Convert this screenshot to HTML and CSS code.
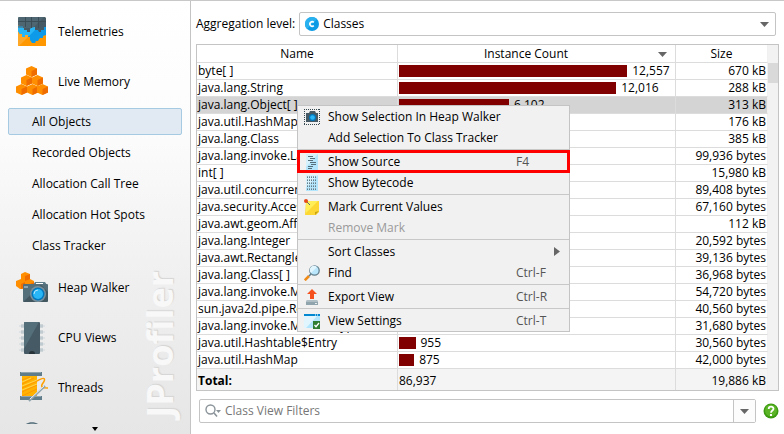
FILE: index.html
```html
<!DOCTYPE html>
<html lang="en">
<head>
<meta charset="utf-8">
<title>JProfiler</title>
<link rel="stylesheet" href="styles.css">
</head>
<body>
<div class="app">
  <aside class="sidebar">
    <div class="watermark" aria-hidden="true">JProfiler</div>
    <nav class="nav">
      <a class="section" href="#telemetries">
        <svg width="32" height="32" viewBox="0 0 32 32"><path fill="#ff9800" d="M2 2h28v28H2z"/><path fill="#ffa726" d="M2 13l18 0L3 30H2z"/><path fill="#0d9be9" d="M2 10h28v9l-3 1v2h-3l-2 3h-2l-1 2h-3l-2-3v-3h-2v-2H9v2H6v-3H4l-2-3z"/><path fill="#29b6f6" d="M2 11l20 0-9 9-1 0v-1H9v2H6v-3H4l-2-3z"/><path fill="#455a64" d="M3 1h26l1 1v9h-2v3h-3v2h-2l-1-2h-3v-3h-3l-2 2v3h-3v-2h-3v-2H7v-2H4l-2-1V2z"/><path fill="#546e7a" opacity=".6" d="M2 1h26L17 12H2z"/><path stroke="#3b4d56" fill="none" d="M2 5.500h28M9.500 1v10M15.500 1v11M22.500 1v11"/></svg>
        <span>Telemetries</span></a>
      <a class="section" href="#memory">
        <svg width="32" height="32" viewBox="0 0 32 32"><defs><g id="cube"><path fill="#ff8f00" d="M0 2.500L5.500 0 11 2.500v6L5.500 11 0 8.500z"/><path fill="#ef6c00" d="M5.500 5L11 2.500v6L5.500 11z"/></g></defs><use href="#cube" x="10" y="0"/><use href="#cube" x="5" y="9"/><use href="#cube" x="16" y="9"/><use href="#cube" x="0" y="18"/><use href="#cube" x="11" y="18"/><use href="#cube" x="21" y="18"/></svg>
        <span>Live Memory</span></a>
      <a class="sub current" href="#all">All Objects</a>
      <a class="sub" href="#recorded">Recorded Objects</a>
      <a class="sub" href="#calltree">Allocation Call Tree</a>
      <a class="sub" href="#hotspots">Allocation Hot Spots</a>
      <a class="sub" href="#tracker">Class Tracker</a>
      <a class="section" href="#heap">
        <svg width="32" height="32" viewBox="0 0 32 32"><path fill="#ff8f00" d="M5 2l4-2 5 2v5l4 2v5l-7 3H4l-4-3V9l5-2z"/><path fill="#ef6c00" d="M9 4l5-2v5l-5 2zM5 12l4-2v5l-4 2zM14 12l4-2v4l-4 2z"/><path fill="#607d8b" d="M17 13l2-3h10l2 3z"/><path fill="#fff" d="M20 11h7v1h-7z"/><rect x="7" y="12" width="25" height="18" rx="1" fill="#546e7a"/><path fill="#37474f" d="M25 13l7 7v9l-1 1H7z" opacity=".6"/><path fill="#90a4ae" d="M8 14h4v2H8z"/><circle cx="22" cy="22" r="8" fill="#78909c"/><circle cx="22" cy="22" r="6.500" fill="#0277bd"/><circle cx="22" cy="22" r="5" fill="#29b6f6"/><path d="M18 22a4 4 0 0 1 4-4" stroke="#b3e5fc" fill="none"/></svg>
        <span>Heap Walker</span></a>
      <a class="section" href="#cpu">
        <svg width="32" height="32" viewBox="0 0 32 32"><path stroke="#b0bec5" stroke-width="3" d="M5 4h22M5 10h22M5 16h22M5 22h22M5 28h22"/><path stroke="#cfd8dc" stroke-width="1" d="M3 4h26M3 10h26M3 16h26M3 22h26M3 28h26"/><rect x="8" y="0" width="16" height="32" rx="1" fill="#455a64"/><path fill="#546e7a" d="M9 0h14L8 27V1z"/><path fill="#263238" d="M13 32a3 3 0 0 1 6 0z"/></svg>
        <span>CPU Views</span></a>
      <a class="section" href="#threads">
        <svg width="32" height="32" viewBox="0 0 32 32"><path fill="#ffb300" d="M6 3h15v22H6z"/><path stroke="#ff9800" fill="none" d="M6 8l8-3M6 12l12-6M6 16l15-7M6 20l15-7M6 24l15-7M14 25l7-3"/><path stroke="#ffd54f" fill="none" d="M6 10l9-4M6 14l15-6M6 18l15-6"/><path fill="#607d8b" d="M4 0h22v4H4zM4 24h22v4H4z"/><path fill="#90a4ae" d="M5 0h20v1H5zM5 24h20v1H5z"/><path stroke="#ffa000" stroke-width="1.500" fill="none" d="M21 9c8-5 9-2 6 2s-1 5 5 5"/><path stroke="#90a4ae" stroke-width="2" fill="none" d="M13 29L29 14"/><path stroke="#eceff1" fill="none" d="M14 27L28 14"/></svg>
        <span>Threads</span></a>
      <a class="section" href="#monitors" aria-label="Monitors">
        <svg width="32" height="32" viewBox="0 0 32 32"><path fill="#546e7a" d="M8 4c3-5 13-5 16 0l2 28H6z"/><path fill="#90a4ae" d="M12 3c2-2 7-2 8 0l-3 2h-3z"/></svg></a>
    </nav>
    <button class="more" aria-label="More views"><svg width="6" height="4" viewBox="0 0 6 4"><path d="M0 0h6L3 4z"/></svg></button>
  </aside>

  <main class="main">
    <div class="level">
      <label for="level">Aggregation level:</label>
      <div class="combo">
        <select id="level"><option>Classes</option></select>
        <svg class="class-icon" width="14" height="14" viewBox="0 0 14 14"><circle cx="7" cy="7" r="7" fill="#0d9be5"/><path fill="#29b1ef" d="M2 12A7 7 0 0 1 12 2z"/><path d="M8.800 5.300a2.300 2.300 0 1 0 0 3.400" fill="none" stroke="#fff" stroke-width="1.600"/></svg>
        <svg class="arrow" width="9" height="5" viewBox="0 0 9 5"><path d="M0 0h9L4.500 5z"/></svg>
      </div>
    </div>

    <div class="grid-frame">
      <table class="objects">
        <colgroup><col class="col-name"><col><col class="col-size"></colgroup>
        <thead><tr><th>Name</th><th class="sorted">Instance Count<svg class="sort" width="9" height="5" viewBox="0 0 9 5"><path d="M0 0h9L4.500 5z"/></svg></th><th>Size</th></tr></thead>
        <tbody>
          <tr><td>byte[ ]</td><td><div class="count"><i style="width:83%"></i>12,557</div></td><td>670 kB</td></tr>
          <tr><td>java.lang.String</td><td><div class="count"><i style="width:79%"></i>12,016</div></td><td>288 kB</td></tr>
          <tr class="selected"><td>java.lang.Object[ ]</td><td><div class="count"><i style="width:40%"></i>6,102</div></td><td>313 kB</td></tr>
          <tr><td>java.util.HashMap$Node</td><td><div class="count"><i style="width:36%"></i>5,504</div></td><td>176 kB</td></tr>
          <tr><td>java.lang.Class</td><td><div class="count"><i style="width:22%"></i>3,312</div></td><td>385 kB</td></tr>
          <tr><td>java.lang.invoke.LambdaForm</td><td><div class="count"><i style="width:20%"></i>3,123</div></td><td>99,936 bytes</td></tr>
          <tr><td>int[ ]</td><td><div class="count"><i style="width:19%"></i>2,910</div></td><td>15,980 kB</td></tr>
          <tr><td>java.util.concurrent.Node</td><td><div class="count"><i style="width:18%"></i>2,794</div></td><td>89,408 bytes</td></tr>
          <tr><td>java.security.AccessControl</td><td><div class="count"><i style="width:11%"></i>1,679</div></td><td>67,160 bytes</td></tr>
          <tr><td>java.awt.geom.AffineTransform</td><td><div class="count"><i style="width:10%"></i>1,560</div></td><td>112 kB</td></tr>
          <tr><td>java.lang.Integer</td><td><div class="count"><i style="width:9%"></i>1,287</div></td><td>20,592 bytes</td></tr>
          <tr><td>java.awt.Rectangle</td><td><div class="count"><i style="width:8%"></i>1,223</div></td><td>39,136 bytes</td></tr>
          <tr><td>java.lang.Class[ ]</td><td><div class="count"><i style="width:8%"></i>1,190</div></td><td>36,968 bytes</td></tr>
          <tr><td>java.lang.invoke.Member</td><td><div class="count"><i style="width:8%"></i>1,140</div></td><td>54,720 bytes</td></tr>
          <tr><td>sun.java2d.pipe.Region</td><td><div class="count"><i style="width:7%"></i>1,014</div></td><td>40,560 bytes</td></tr>
          <tr><td>java.lang.invoke.MethodType</td><td><div class="count"><i style="width:7%"></i>990</div></td><td>31,680 bytes</td></tr>
          <tr><td>java.util.Hashtable$Entry</td><td><div class="count"><i style="width:6%"></i>955</div></td><td>30,560 bytes</td></tr>
          <tr><td>java.util.HashMap</td><td><div class="count"><i style="width:5.500%"></i>875</div></td><td>42,000 bytes</td></tr>
        </tbody>
        <tfoot><tr><td>Total:</td><td>86,937</td><td>19,886 kB</td></tr></tfoot>
      </table>
      <div class="scroll"><div class="thumb"></div></div>
    </div>

    <div class="filter-row">
      <div class="filter">
        <svg width="17" height="14" viewBox="0 0 17 14"><circle cx="5.500" cy="5.500" r="4.500" fill="none" stroke="#8a9399" stroke-width="1.400"/><path d="M9 9l3 3.500" stroke="#8a9399" stroke-width="1.600"/><path fill="#8a9399" d="M11 6h5l-2.500 3z"/></svg>
        <input type="text" aria-label="Class View Filters" placeholder="Class View Filters">
        <button class="drop" aria-label="Filter history"><svg class="arrow-svg" width="9" height="5" viewBox="0 0 9 5"><path d="M0 0h9L4.500 5z"/></svg></button>
      </div>
      <button class="help" aria-label="Help"><svg width="16" height="16" viewBox="0 0 16 16"><circle cx="8" cy="8" r="7.500" fill="#3c9a12"/><circle cx="8" cy="7.500" r="6" fill="#5bb526"/><path d="M5.700 6c0-3 4.800-3 4.800-.2C10.500 7.500 8 7.500 8 9.700" fill="none" stroke="#fff" stroke-width="1.800"/><path fill="#fff" d="M7 11h2v2H7z"/></svg></button>
    </div>
  </main>

  <div class="menu" role="menu">
    <button role="menuitem"><svg width="16" height="16" viewBox="0 0 16 16"><path fill="none" stroke="#37474f" stroke-dasharray="1 1" d="M0 .5h16M0 15.500h16M.5 0v16M15.500 0v16"/><path fill="#455a64" d="M2 4h3l1-2h5l1 2h2v9H2z"/><circle cx="8.500" cy="8.500" r="3.500" fill="#0277bd"/><circle cx="8.500" cy="8.500" r="2.300" fill="#29b6f6"/></svg><span>Show Selection In Heap Walker</span></button>
    <button role="menuitem"><i class="blank"></i><span>Add Selection To Class Tracker</span></button>
    <hr>
    <button role="menuitem" class="marked"><svg width="16" height="16" viewBox="0 0 16 16"><path fill="#b3e5fc" d="M2 0h12v16H2z"/><path fill="#d7f1fc" d="M2 0h12L2 13z"/><path stroke="#546e7a" d="M4 2.500h5M6 4.500h5M4 6.500h5M6 8.500h6M7 10.500h5M4 12.500h5M4 14.500h4"/></svg><span>Show Source</span><kbd>F4</kbd></button>
    <button role="menuitem"><svg width="16" height="16" viewBox="0 0 16 16"><path fill="#b3e5fc" d="M2 0h12v16H2z"/><path fill="#d7f1fc" d="M2 0h12L2 13z"/><path stroke="#607d8b" stroke-dasharray="1 1" d="M3 2.500h10M3 5.500h10M3 8.500h10M3 11.500h10M3 14.500h10"/><path stroke="#90a4ae" stroke-dasharray="1 1" d="M3 1.500h10M3 4.500h10M3 7.500h10M3 10.500h10M3 13.500h10"/></svg><span>Show Bytecode</span></button>
    <hr>
    <button role="menuitem"><svg width="16" height="16" viewBox="0 0 16 16"><path fill="#fdd835" d="M2 2h13v11l-3 3H1z"/><path fill="#ffee58" d="M2 2h12L2 14z"/><path fill="#c8a415" d="M15 12l-4 4v-3z"/><path stroke="#546e7a" d="M3 3l3 3"/><circle cx="2" cy="2" r="2" fill="#e64a19"/></svg><span>Mark Current Values</span></button>
    <button role="menuitem" disabled><i class="blank"></i><span>Remove Mark</span></button>
    <hr>
    <button role="menuitem"><i class="blank"></i><span>Sort Classes</span><svg class="expand" width="6" height="9" viewBox="0 0 6 9"><path fill="#666" d="M0 0l6 4.500L0 9z"/></svg></button>
    <button role="menuitem"><svg width="16" height="16" viewBox="0 0 16 16"><path stroke="#ef8a17" stroke-width="2.600" d="M.8 15.200L5 11"/><path stroke="#607d8b" stroke-width="1.600" d="M5 11l2-2"/><circle cx="10.500" cy="5.500" r="4.700" fill="#b9e6fb" stroke="#607d8b" stroke-width="1.300"/><path fill="#e1f5fe" d="M7 8a4 4 0 0 1 6-6z"/></svg><span>Find</span><kbd>Ctrl-F</kbd></button>
    <hr>
    <button role="menuitem"><svg width="16" height="16" viewBox="0 0 16 16"><path fill="#f4511e" d="M8 0l5 5h-3v5H6V5H3z"/><path fill="#b0bec5" d="M3 11h10l1 1v4H2v-4z"/><path fill="#90a4ae" d="M2 13h12v3H2z"/><path fill="#eceff1" d="M11 14h2v1h-2z"/></svg><span>Export View</span><kbd>Ctrl-R</kbd></button>
    <hr>
    <button role="menuitem"><svg width="16" height="16" viewBox="0 0 16 16"><path fill="#b3e5fc" d="M0 1h16v14H0z"/><path fill="#e1f5fe" d="M0 3h13L2 15H0z"/><path fill="#0288d1" d="M0 1h16v2H0z"/><path fill="#fff" d="M11 1.500h1v1h-1zM13 1.500h1v1h-1z"/><path fill="#2e7d32" d="M9 8h7v8H9z"/><path d="M10.500 12l1.500 1.700 3-3.700" fill="none" stroke="#fff" stroke-width="1.300"/></svg><span>View Settings</span><kbd>Ctrl-T</kbd></button>
  </div>
</div>
</body>
</html>
```
FILE: styles.css
```css
* { box-sizing: border-box; }
body {
  margin: 0;
  font: 12px/16px "Open Sans", "Noto Sans", sans-serif;
  color: #000;
  background: #fff;
}
button, input, select { font: inherit; color: inherit; }
svg { flex: none; display: block; }
a { color: inherit; text-decoration: none; }

.app {
  position: relative;
  display: flex;
  height: 100vh;
  border-top: 1px solid #c8c8c8;
}

/* Sidebar */
.sidebar {
  position: relative;
  display: flex;
  flex-direction: column;
  flex: 0 0 191px;
  border-right: 1px solid #c4c4c4;
  background: linear-gradient(#fff, #fcfcfc 30%, #efefef 66%, #e6e6e6);
}
.nav {
  position: relative;
  flex: 1;
  min-height: 0;
  overflow: hidden;
  padding: 6px 8px 0;
}
.section {
  display: flex;
  align-items: center;
  gap: 10px;
  height: 50px;
  padding-left: 8px;
}
.sub {
  display: flex;
  align-items: center;
  height: 27px;
  margin: 4px 0;
  padding-left: 23px;
  border: 1px solid transparent;
  border-radius: 2px;
}
.section + .sub { margin-top: 1px; }
.current { background: #e1eaf3; border-color: #a5cae2; }
.more {
  display: flex;
  justify-content: center;
  align-items: center;
  height: 10px;
  padding: 0;
  border: 0;
  background: none;
}
.watermark {
  position: absolute;
  right: 7px;
  bottom: 16px;
  writing-mode: vertical-rl;
  transform: rotate(180deg);
  font: bold 36px/46px "Open Sans", sans-serif;
  color: #f8f8f8;
  text-shadow: 1px 1px 1px #d4d4d4;
}

/* Main view */
.main {
  display: flex;
  flex-direction: column;
  flex: 1;
  min-width: 0;
  padding: 11px 5px 11px;
}
.level {
  display: flex;
  align-items: center;
  gap: 4px;
  padding-right: 3px;
}
.level label { flex: none; white-space: nowrap; }
.combo { position: relative; flex: 1; }
.combo select {
  display: block;
  width: 100%;
  height: 24px;
  padding: 0 23px;
  border: 1px solid #c4c4c4;
  border-radius: 2px;
  background: #fff;
  appearance: none;
}
.class-icon { position: absolute; left: 6px; top: 5px; }
.arrow { position: absolute; right: 7px; top: 10px; }
.arrow, .sort, .arrow-svg { fill: #666; }

.grid-frame {
  display: flex;
  margin-top: 8px;
  border: 1px solid #c4c4c4;
}
.objects {
  flex: 1;
  min-width: 0;
  table-layout: fixed;
  border-spacing: 0;
}
.col-name { width: 201px; }
.col-size { width: 92px; }
.objects th, .objects td {
  height: 17px;
  padding: 0 1px;
  line-height: 16px;
  border-bottom: 1px solid #dcdcdc;
  border-right: 1px solid #dcdcdc;
  text-align: left;
  white-space: nowrap;
  overflow: hidden;
}
.objects th {
  position: relative;
  height: 18px;
  line-height: 17px;
  font-weight: normal;
  text-align: center;
}
.objects th.sorted { padding-right: 22px; }
.sort { position: absolute; right: 8px; top: 7px; }
.objects td:last-child { text-align: right; }
.objects th:last-child, .objects td:last-child { border-right-color: #f0f0f0; }
.selected { background: #d4d4d4; }
.count { display: flex; align-items: center; gap: 5px; height: 16px; }
.count i { flex: none; height: 12px; background: #800000; }
.objects tfoot td {
  height: 21px;
  padding-top: 2px;
  line-height: 19px;
  border-bottom: 0;
  background: #f4f4f4;
}
.objects tfoot td:first-child { font-weight: bold; }
.scroll { flex: 0 0 10px; padding-top: 18px; background: #f2f2f2; }
.thumb { height: 20px; background: #d9d9d9; }

/* Filter bar */
.filter-row {
  display: flex;
  align-items: center;
  gap: 7px;
  margin-top: 8px;
  padding-left: 3px;
}
.filter {
  display: flex;
  align-items: center;
  gap: 3px;
  flex: 1;
  height: 24px;
  padding-left: 5px;
  border: 1px solid #c4c4c4;
  border-radius: 2px;
}
.filter input {
  flex: 1;
  min-width: 0;
  padding: 0;
  border: 0;
  outline: 0;
  background: none;
}
.filter input::placeholder { color: #777; opacity: 1; }
.drop {
  display: flex;
  align-items: center;
  justify-content: center;
  width: 22px;
  height: 22px;
  padding: 0;
  border: 0;
  border-left: 1px solid #c4c4c4;
  background: #fcfcfc;
}
.help { padding: 0; border: 0; background: none; }

/* Context menu */
.menu {
  position: absolute;
  left: 297px;
  top: 104px;
  width: 273px;
  border: 1px solid #c4c4c4;
  background: #f1f1f1;
}
.menu button {
  display: flex;
  align-items: center;
  gap: 8px;
  width: 100%;
  height: 21px;
  padding: 0 6px;
  border: 0;
  background: none;
  text-align: left;
  white-space: nowrap;
}
.menu button span { flex: 1; }
.menu button:disabled { color: #9a9a9a; }
.menu hr {
  height: 3px;
  margin: 0;
  border: 1px solid #f1f1f1;
  border-width: 1px 0;
  background: #c8c8c8;
}
.menu kbd { width: 47px; font: inherit; color: #555; }
.blank { width: 16px; }
.expand { margin-right: 3px; }
.menu .marked { outline: 3px solid #f00; outline-offset: -2px; }
```
